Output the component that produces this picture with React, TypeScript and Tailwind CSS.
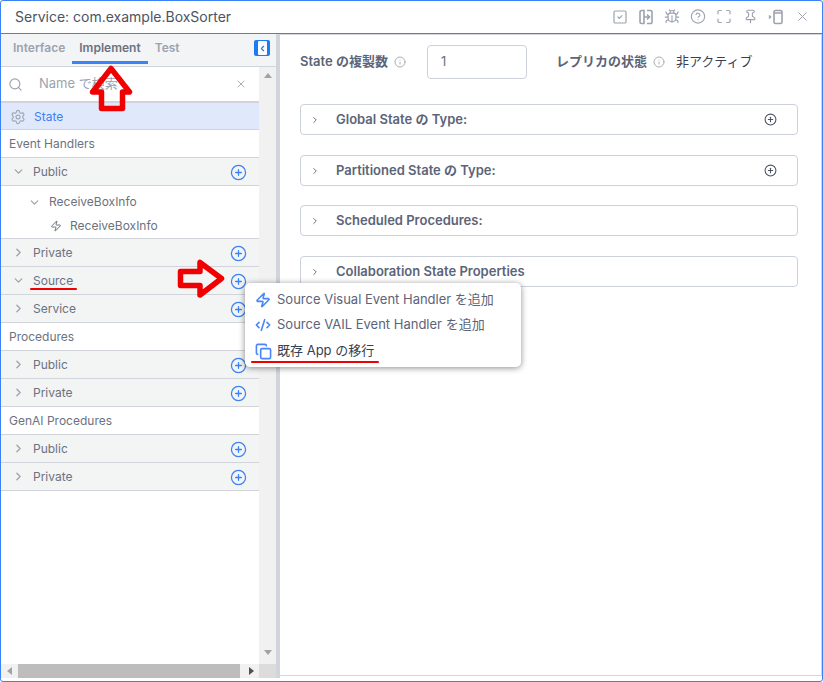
import { type JSX } from "react";
import { ChevronDown, ChevronRight, ChevronLeft, CirclePlus, Search, X, Settings, Zap, Info, CodeXml, Copy, SquareCheck, Bug, CircleHelp, Maximize, Pin } from "lucide-react";

function AddBtn(): JSX.Element {
  return <CirclePlus size={17} strokeWidth={1.8} className="mt-[2px] text-[#3b82f6]" />;
}

function GroupRow({ label, open }: { label: string; open?: boolean }): JSX.Element {
  return (
    <div className="flex h-7 shrink-0 items-center border-b border-[#d1d5db] bg-[#f3f4f4] pr-[12px] pl-[11px] text-[12px] text-[#6b7280]">
      {open ? <ChevronDown size={13} strokeWidth={2.4} className="text-[#9ca3af]" /> : <ChevronRight size={13} strokeWidth={2.4} className="text-[#9ca3af]" />}
      <span className="ml-[8px] flex-1">{label}</span>
      <AddBtn />
    </div>
  );
}

function Section({ label }: { label: string }): JSX.Element {
  return (
    <div className="flex h-7 shrink-0 items-center border-b border-[#d1d5db] bg-white pt-px pl-2 text-[12px] text-[#6b7280]">{label}</div>
  );
}

function Panel({ label, plus, className }: { label: string; plus?: boolean; className: string }): JSX.Element {
  return (
    <div className={`flex h-[31px] items-center rounded border border-[#cbd0da] bg-white pr-[20px] pl-[9px] text-[13px] font-semibold text-[#5b6478] ${className}`}>
      <ChevronRight size={10} strokeWidth={2.4} className="text-[#6b7280]" />
      <span className="ml-[16px] flex-1">{label}</span>
      {plus && <CirclePlus size={13} className="text-[#4b5563]" />}
    </div>
  );
}

function HeadIcon({ children }: { children: JSX.Element }): JSX.Element {
  return <span className="flex h-4 w-4 items-center justify-center">{children}</span>;
}

export default function App(): JSX.Element {
  return (
    <div className="relative flex h-[682px] w-[823px] flex-col overflow-hidden rounded-[3px] border border-[#3b82f6] bg-white font-['Inter','Noto_Sans_CJK_JP',sans-serif]">
      <header className="flex h-[33px] shrink-0 items-center border-b border-[#3b82f6] pr-[12px] pb-px pl-[14px]">
        <span className="flex-1 text-[14px] text-[#4b5563]">Service: com.example.BoxSorter</span>
        <div className="flex items-center gap-[10px] text-[#9ca3af]">
          <HeadIcon><SquareCheck size={16} strokeWidth={1.8} /></HeadIcon>
          <HeadIcon>
            <svg viewBox="0 0 16 16" className="h-4 w-4" fill="none" stroke="currentColor" strokeWidth="1.6">
              <path d="M6 1.500H3.500a1.500 1.500 0 0 0-1.500 1.500v10a1.500 1.500 0 0 0 1.500 1.500H6V1.500zM9 1.500h3.500a1.500 1.500 0 0 1 1.500 1.500v10a1.500 1.500 0 0 1-1.500 1.500H9M6 8h5.500M9 5.500 11.500 8 9 10.500" />
            </svg>
          </HeadIcon>
          <HeadIcon><Bug size={17} strokeWidth={1.7} /></HeadIcon>
          <HeadIcon><CircleHelp size={17} strokeWidth={1.7} /></HeadIcon>
          <HeadIcon><Maximize size={17} strokeWidth={1.8} /></HeadIcon>
          <HeadIcon><Pin size={15} strokeWidth={1.8} /></HeadIcon>
          <HeadIcon>
            <svg viewBox="0 0 16 16" className="h-4 w-4" fill="none" stroke="currentColor" strokeWidth="1.6">
              <rect x="6" y="1.500" width="8" height="13" rx="1.500" />
              <path d="M6 4h8M1 6.500 2.500 8 1 9.500" />
            </svg>
          </HeadIcon>
          <HeadIcon><X size={15} strokeWidth={1.6} /></HeadIcon>
        </div>
      </header>

      <div className="flex min-h-0 flex-1">
        <aside className="flex w-[275px] shrink-0 flex-col pb-[3px]">
          <div className="relative flex h-[33px] shrink-0 items-start border-b border-[#d1d5db] bg-[#f3f4f6] pl-[12px] text-[12px] font-semibold text-[#9ca3af]">
            <span className="mt-[5px]">Interface</span>
            <span className="relative mt-[5px] ml-[14px] text-[#6b7280]">
              Implement
              <span className="absolute -right-[7px] -bottom-[7px] -left-[7px] h-[3px] bg-[#3b82f6]" />
            </span>
            <span className="mt-[5px] ml-[14px]">Test</span>
            <span className="absolute top-[6px] left-[253px] flex h-[16px] w-[16px] items-center justify-center rounded-[2px] bg-[#1d7cf2]">
              <span className="flex h-[14px] w-[9px] items-center justify-center rounded-[1px] bg-white">
                <ChevronLeft size={9} strokeWidth={3} className="text-[#1d7cf2]" />
              </span>
            </span>
          </div>
          <div className="flex min-h-0 flex-1">
            <div className="flex w-[258px] shrink-0 flex-col">
              <div className="flex h-[36px] shrink-0 items-center border-b-2 border-[#d1d5db] pr-[12px] pl-[7px] text-[13px] text-[#9ca3af]">
                <Search size={15} strokeWidth={1.8} />
                <span className="ml-[16px] flex-1">Name で検索</span>
                <X size={12} strokeWidth={1.8} />
              </div>
              <div className="flex h-[27px] shrink-0 items-center border-b border-[#d1d5db] bg-[#e0e9fb] pt-px pl-[9px] text-[12px] text-[#3b82f6]">
                <Settings size={16} strokeWidth={1.6} className="text-[#9ca3af]" />
                <span className="ml-[8px]">State</span>
              </div>
              <Section label="Event Handlers" />
              <GroupRow label="Public" open />
              <div className="flex h-[53px] shrink-0 flex-col border-b border-[#d1d5db] text-[12px] text-[#6b7280]">
                <div className="mt-[4px] flex h-[24px] items-center pl-[27px]">
                  <ChevronDown size={13} strokeWidth={2.2} className="text-[#9ca3af]" />
                  <span className="ml-[8px]">ReceiveBoxInfo</span>
                </div>
                <div className="flex h-[24px] items-center pl-[49px]">
                  <Zap size={12} strokeWidth={2} className="text-[#6b7280]" />
                  <span className="ml-[8px]">ReceiveBoxInfo</span>
                </div>
              </div>
              <GroupRow label="Private" />
              <GroupRow label="Source" open />
              <GroupRow label="Service" />
              <Section label="Procedures" />
              <GroupRow label="Public" />
              <GroupRow label="Private" />
              <Section label="GenAI Procedures" />
              <GroupRow label="Public" />
              <GroupRow label="Private" />
            </div>
            <div className="flex w-[17px] shrink-0 flex-col items-center justify-between bg-[#f1f1f1] pt-[6px] pb-[9px]">
              <span className="h-0 w-0 border-x-[4px] border-b-[5px] border-x-transparent border-b-[#a3a3a3]" />
              <span className="h-0 w-0 border-x-[4px] border-t-[5px] border-x-transparent border-t-[#a3a3a3]" />
            </div>
          </div>
          <div className="flex h-[14px] shrink-0 items-center bg-[#f1f1f1]">
            <span className="ml-[6px] h-0 w-0 border-y-[4px] border-r-[5px] border-y-transparent border-r-[#a3a3a3]" />
            <span className="ml-[6px] h-[14px] w-[222px] bg-[#bdbdbd]" />
            <span className="ml-[9px] h-0 w-0 border-y-[4px] border-l-[5px] border-y-transparent border-l-[#505050]" />
            <span className="ml-auto h-[14px] w-[17px] bg-[#dcdcdc]" />
          </div>
        </aside>
        <div className="mb-[3px] w-[4px] shrink-0 bg-[#d1d5db]" />

        <main className="mb-[5px] flex min-w-0 flex-1 flex-col border-t border-r border-b border-[#d4d6db] pt-[10px] pr-[23px] pl-[20px]">
          <div className="flex h-[34px] items-center">
            <span className="text-[13px] font-semibold text-[#5b6478]">State の複製数</span>
            <Info size={12} className="ml-[6px] text-[#a8adb6]" />
            <div className="ml-[21px] flex h-[34px] w-[100px] items-center rounded border border-[#cbd0da] pl-[13px] text-[13px] text-[#6b7280]">1</div>
            <span className="ml-[29px] text-[13px] font-semibold text-[#5b6478]">レプリカの状態</span>
            <Info size={12} className="ml-[6px] text-[#a8adb6]" />
            <span className="ml-[11px] text-[13px] text-[#374151]">非アクティブ</span>
          </div>
          <div className="mt-[25px] flex flex-col">
            <Panel label="Global State の Type:" plus className="mt-0" />
            <Panel label="Partitioned State の Type:" plus className="mt-[20px]" />
            <Panel label="Scheduled Procedures:" className="mt-[19px]" />
            <Panel label="Collaboration State Properties" className="mt-[20px]" />
          </div>
        </main>
      </div>

      {/* menu + annotations sit on top of the page */}
      <div className="absolute top-[282px] left-[244px] flex h-[84px] w-[276px] flex-col rounded-[5px] bg-white pt-[4.5px] pl-[10px] text-[13px] text-[#5b6478] shadow-[0_1px_6px_rgba(0,0,0,0.45)]">
        <div className="flex h-[25px] items-center">
          <Zap size={16} strokeWidth={2.4} className="text-[#4a86f7]" />
          <span className="ml-[6px]">Source Visual Event Handler を追加</span>
        </div>
        <div className="flex h-[25px] items-center">
          <CodeXml size={16} strokeWidth={2.4} className="text-[#4a86f7]" />
          <span className="ml-[6px]">Source VAIL Event Handler を追加</span>
        </div>
        <div className="mt-px flex h-[25px] items-center">
          <Copy size={17} strokeWidth={2.3} className="text-[#4a86f7]" />
          <span className="ml-[5px] text-[#374151]">既存 App の移行</span>
        </div>
      </div>

      <svg viewBox="0 0 44 47" className="absolute top-[64px] left-[88px] h-[47px] w-[44px]" fill="none" stroke="#f00000" strokeWidth="5.500" strokeLinejoin="round">
        <path d="M22 3.500 40.500 27H33.500V43.500H12.500V27H3.500Z" />
      </svg>
      <svg viewBox="0 0 48 40" className="absolute top-[258px] left-[176px] h-[40px] w-[48px]" fill="none" stroke="#f00000" strokeWidth="5.500" strokeLinejoin="round">
        <path d="M44.500 19.500 23 3.500V12.500H3.500V26.500H23V36Z" />
      </svg>
      <span className="absolute top-[287px] left-[29px] h-[2px] w-[47px] rounded bg-[#f00000]" />
      <span className="absolute top-[360px] left-[250px] h-[2px] w-[128px] rounded bg-[#f00000]" />
    </div>
  );
}
